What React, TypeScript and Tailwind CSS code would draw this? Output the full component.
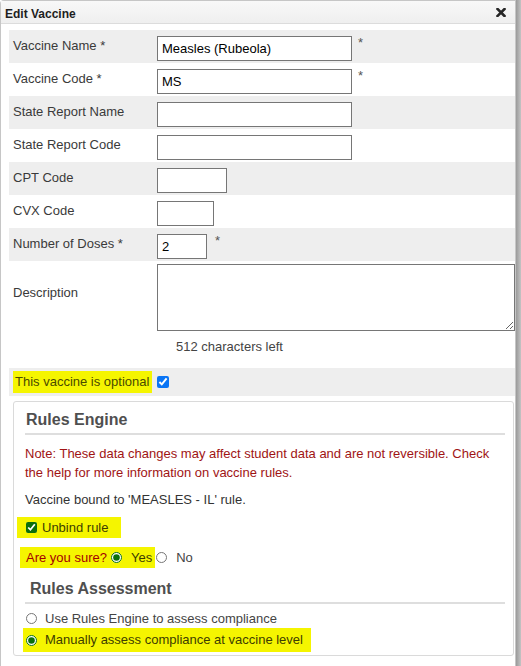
import React from 'react'

const font = "font-['Liberation_Sans',Arial,sans-serif]"

interface RowProps {
  label: string
  gray?: boolean
  width: number
  value?: string
  required?: boolean
  starGap?: string
}

function FieldRow({ label, gray, width, value, required, starGap = 'ml-[6px]' }: RowProps) {
  return (
    <div className={`flex h-[33px] items-start ${gray ? 'bg-[#eeeeee]' : 'bg-white'}`}>
      <div className="w-[148px] shrink-0 pl-[4px] pt-[8px] leading-[16px] text-[13px] text-[#3a3a3a]">
        {label}
      </div>
      <input
        type="text"
        defaultValue={value}
        style={{ width }}
        className="mt-[6px] h-[25px] border border-[#767676] bg-white px-[4px] text-[13px] text-black outline-none"
      />
      {required && (
        <span className={`${starGap} mt-[5px] leading-[16px] text-[13px] text-[#555]`}>*</span>
      )}
    </div>
  )
}

export default function App() {
  return (
    <div className={`${font} flex h-[666px] w-[521px] bg-white`}>
      {/* Dialog */}
      <div className="flex w-[516px] shrink-0 flex-col rounded-tl-[4px] border border-b-0 border-[#c6c6c6] bg-white">
        {/* Title bar */}
        <div className="flex h-[23px] shrink-0 items-center justify-between border-b border-[#dcdcdc] bg-gradient-to-b from-[#f8f8f8] to-[#efefef] pl-[4px] pr-[9px]">
          <span className="pt-[3px] text-[12px] font-bold text-[#1e1e1e]">Edit Vaccine</span>
          <svg width="10" height="9" viewBox="0 0 10 9">
            <path d="M1.5 1 L8.5 8 M8.5 1 L1.5 8" stroke="#262626" strokeWidth="2.6" strokeLinecap="square" />
          </svg>
        </div>

        {/* Body */}
        <div className="flex flex-col pl-[8px] pt-[6px]">
          <FieldRow label="Vaccine Name *" gray width={195} value="Measles (Rubeola)" required />
          <FieldRow label="Vaccine Code *" width={195} value="MS" required />
          <FieldRow label="State Report Name" gray width={195} />
          <FieldRow label="State Report Code" width={195} />
          <FieldRow label="CPT Code" gray width={70} />
          <FieldRow label="CVX Code" width={57} />
          <FieldRow label="Number of Doses *" gray width={50} value="2" required starGap="ml-[8px]" />

          {/* Description */}
          <div className="flex h-[107px] items-start bg-white pt-[3px]">
            <div className="w-[148px] shrink-0 pl-[4px] pt-[21px] leading-[16px] text-[13px] text-[#3a3a3a]">
              Description
            </div>
            <div className="flex flex-col">
              <textarea className="h-[67px] w-[358px] border border-[#767676] bg-white text-[13px] outline-none" />
              <span className="ml-[19px] mt-[8px] leading-[16px] text-[13px] text-[#444]">512 characters left</span>
            </div>
          </div>

          {/* Optional */}
          <div className="flex h-[28px] items-center bg-[#eeeeee] pl-[4px]">
            <span className="flex h-[22px] items-center bg-[#f5f500] pl-[2px] pr-[3px] text-[13px] text-[#4a4a00]">
              This vaccine is optional
            </span>
            <input type="checkbox" defaultChecked className="ml-[5px] m-0 h-[12px] w-[12px] accent-[#0a75f5]" />
          </div>

          {/* Rules engine */}
          <div className="ml-[4px] mr-[1px] mt-[5px] flex h-[255px] flex-col rounded-[3px] border border-[#dadada] pl-[11px] pr-[8px]">
            <div className="mt-[8px] pl-[1px] leading-[20px] text-[16px] font-bold text-[#4f4f4f]">Rules Engine</div>
            <div className="mt-[3px] border-t-2 border-[#dedede]" />
            <p className="mt-[9px] leading-[19px] text-[13px] text-[#a01414]">
              Note: These data changes may affect student data and are not reversible. Check the help for more
              information on vaccine rules.
            </p>
            <p className="mt-[8px] leading-[19px] text-[13px] text-[#333]">Vaccine bound to 'MEASLES - IL' rule.</p>

            <div className="mt-[8px] flex">
              <label className="-ml-[8px] flex h-[21px] items-center gap-[5px] bg-[#f5f500] pl-[9px] pr-[12px] text-[13px] text-[#3d3d00]">
                <input type="checkbox" defaultChecked className="m-0 h-[11px] w-[11px] accent-[#0b6e0b]" />
                Unbind rule
              </label>
            </div>

            <div className="mt-[9px] flex items-center text-[13px]">
              <div className="-ml-[5px] flex h-[21px] items-center bg-[#f5f500] pl-[6px] pr-[3px]">
                <span className="text-[#a50000]">Are you sure?</span>
                <input type="radio" name="sure" defaultChecked className="m-0 ml-[4px] h-[11px] w-[11px] accent-[#0b6e0b]" />
                <span className="ml-[9px] text-[#3d3d00]">Yes</span>
              </div>
              <input type="radio" name="sure" className="m-0 ml-[1px] h-[11px] w-[11px]" />
              <span className="ml-[9px] text-[#444]">No</span>
            </div>

            <div className="mt-[11px] pl-[5px] leading-[20px] text-[16px] font-bold text-[#4f4f4f]">Rules Assessment</div>
            <div className="mt-[3px] border-t-2 border-[#dedede]" />

            <label className="mt-[5px] flex h-[19px] items-center text-[13px] text-[#444]">
              <input type="radio" name="assess" className="m-0 ml-[1px] h-[11px] w-[11px]" />
              <span className="ml-[8px]">Use Rules Engine to assess compliance</span>
            </label>
            <div className="flex">
              <label className="-ml-[2px] flex h-[24px] items-center bg-[#f5f500] pl-[3px] pr-[8px] text-[13px] text-[#3d3d00]">
                <input type="radio" name="assess" defaultChecked className="m-0 h-[11px] w-[11px] accent-[#0b6e0b]" />
                <span className="ml-[8px]">Manually assess compliance at vaccine level</span>
              </label>
            </div>
          </div>
        </div>
      </div>

      {/* Right edge strip */}
      <div className="w-[5px] shrink-0 bg-gradient-to-r from-[#9a9a9a] to-[#c4c4c4]" />
    </div>
  )
}
